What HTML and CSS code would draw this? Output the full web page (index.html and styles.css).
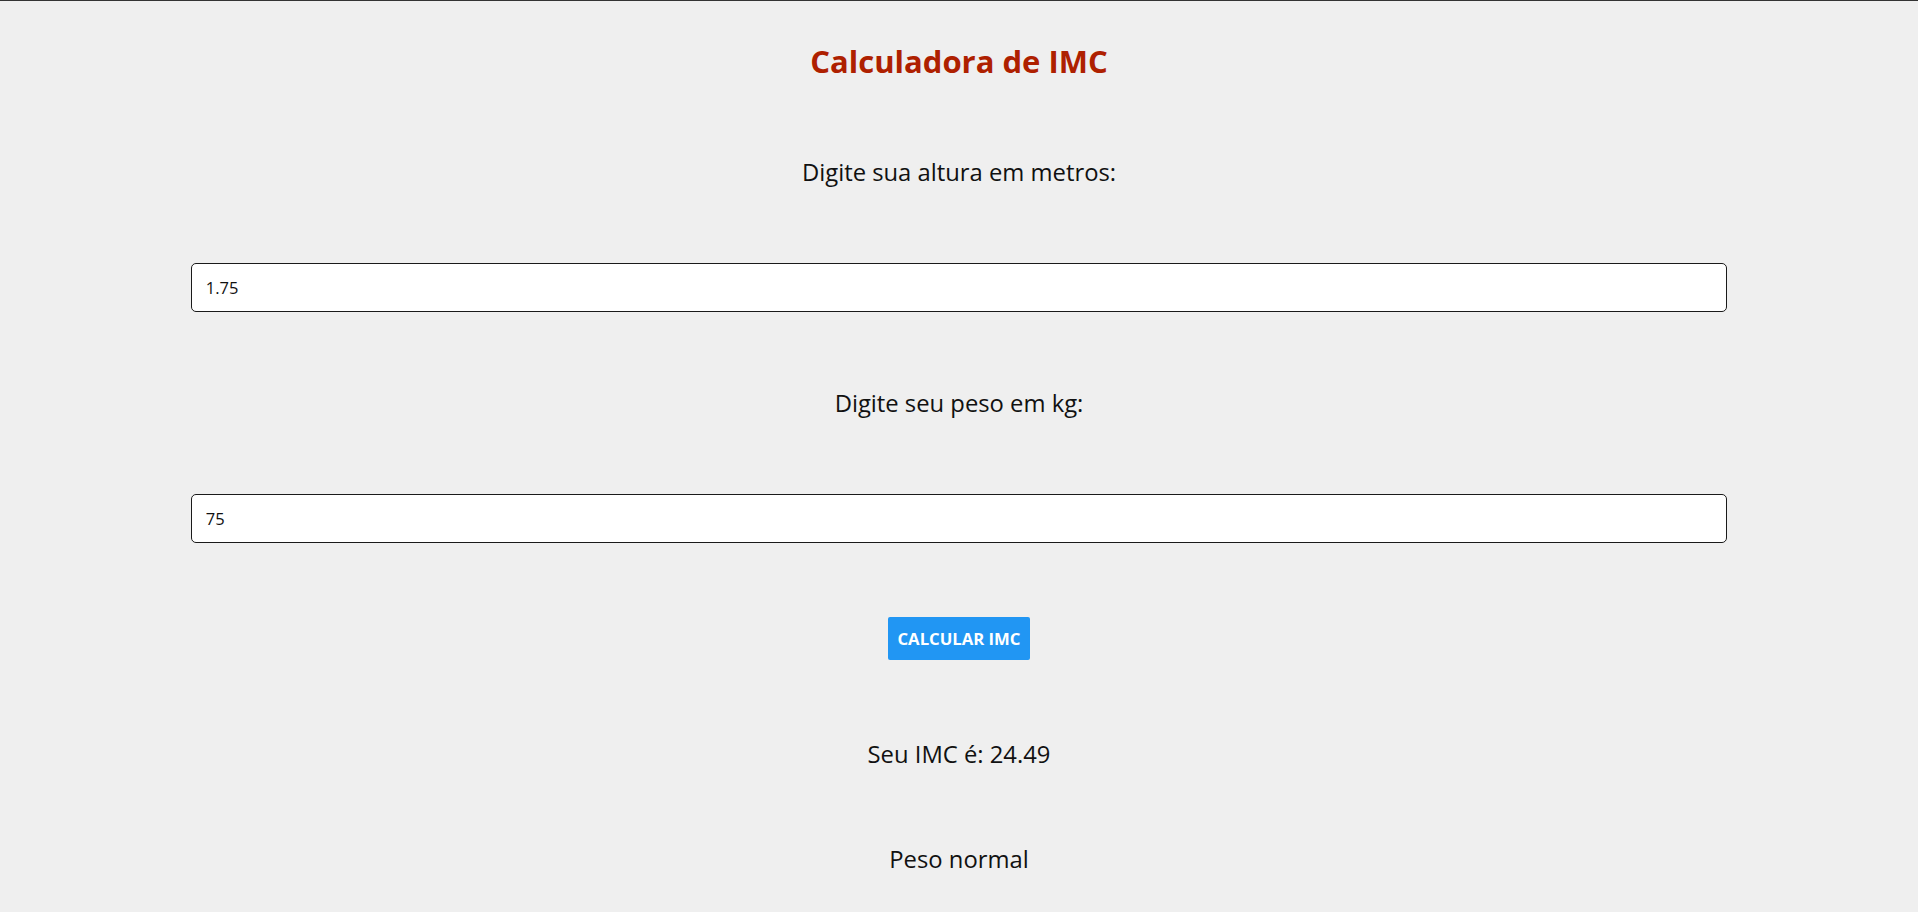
FILE: index.html
```html
<!DOCTYPE html>
<html lang="pt-BR">
<head>
<meta charset="utf-8">
<title>Calculadora de IMC</title>
<link rel="stylesheet" href="styles.css">
</head>
<body>
<main class="app">
  <h1 class="title">Calculadora de IMC</h1>
  <p class="label label-first">Digite sua altura em metros:</p>
  <input class="field" type="text" value="1.75">
  <p class="label">Digite seu peso em kg:</p>
  <input class="field" type="text" value="75">
  <button class="btn" type="button">CALCULAR IMC</button>
  <p class="result">Seu IMC é: 24.49</p>
  <p class="result result-class">Peso normal</p>
</main>
</body>
</html>
```

FILE: styles.css
```css
html, body {
  margin: 0;
  padding: 0;
}
body {
  background: #efefef;
  border-top: 1px solid #333333;
  font-family: "Open Sans", "Noto Sans", sans-serif;
  color: #111111;
  height: 911px;
  overflow: hidden;
}
.app {
  display: flex;
  flex-direction: column;
  align-items: center;
}
.title {
  margin: 43px 0 0;
  font-size: 31px;
  line-height: 35px;
  font-weight: 700;
  color: #ae2000;
}
.label {
  margin: 78px 0 0;
  font-size: 23.8px;
  line-height: 26px;
}
.label-first {
  margin-top: 80px;
}
.field {
  box-sizing: border-box;
  width: 80.1%;
  height: 49px;
  margin: 78px 0 0;
  padding: 0 14px;
  border: 1px solid #1a1a1a;
  border-radius: 5px;
  background: #ffffff;
  font-family: "Open Sans", "Noto Sans", sans-serif;
  font-size: 16.5px;
  color: #111111;
  outline: none;
}
.btn {
  box-sizing: border-box;
  width: 142px;
  height: 43px;
  margin: 74px 0 0;
  border: none;
  border-radius: 2px;
  background: #2196f3;
  color: #ffffff;
  font-family: "Open Sans", "Noto Sans", sans-serif;
  font-size: 16.7px;
  font-weight: 700;
  padding: 0;
}
.result {
  margin: 81px 0 0;
  font-size: 23.8px;
  line-height: 26px;
}
.result-class {
  margin-top: 79px;
}
```
